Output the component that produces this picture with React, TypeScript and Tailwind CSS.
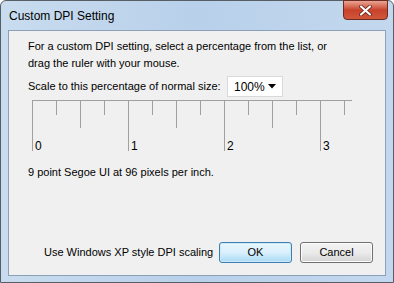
import React from 'react';

const font = "font-['Liberation_Sans',Arial,sans-serif]";

const ticks = Array.from({ length: 14 }, (_, i) => i);

function Ruler() {
  return (
    <div className="relative ml-[4px] h-[52px] w-[320px] border-t border-[#a0a0a0]">
      {ticks.map((i) => {
        const major = i % 4 === 0;
        const half = i % 2 === 0;
        const h = major ? 'h-[50px]' : half ? 'h-[27px]' : 'h-[14px]';
        return (
          <div
            key={i}
            className={`absolute top-0 w-px bg-[#a0a0a0] ${h}`}
            style={{ left: i * 24 }}
          />
        );
      })}
      {[0, 1, 2, 3].map((n) => (
        <span
          key={n}
          className="absolute top-[38px] text-[12px] leading-[14px] text-black"
          style={{ left: n * 96 + 3 }}
        >
          {n}
        </span>
      ))}
    </div>
  );
}

export default function App() {
  return (
    <div className={`${font} relative h-[283px] w-[394px] overflow-hidden bg-white`}>
      <div className="flex h-full flex-col rounded-t-[6px] border border-[#585e66] bg-gradient-to-r from-[#c9dcef] via-[#b8d0ea] to-[#c3d8ee] px-[7px] pb-[6px]">
        <div className="relative flex h-[29px] shrink-0 items-center pl-[1px]">
          <span className="text-[12px] text-black">Custom DPI Setting</span>
          <div className="absolute right-[-2px] top-[-1px] flex h-[20px] w-[45px] items-center justify-center rounded-b-[4px] border border-[#6d2a20] bg-gradient-to-b from-[#e8a493] via-[#c8412a] to-[#d0573c]">
            <svg width="13" height="11" viewBox="0 0 13 11">
              <path d="M2 1.5 L11 9.5 M11 1.5 L2 9.5" stroke="#5a1b10" strokeWidth="3.6" strokeLinecap="round" />
              <path d="M2 1.5 L11 9.5 M11 1.5 L2 9.5" stroke="#ffffff" strokeWidth="2.2" strokeLinecap="round" />
            </svg>
          </div>
        </div>
        <div className="flex flex-1 flex-col border border-[#8ca0b8] bg-[#f0f0f0] pl-[19px] pr-[12px] pt-[7px] text-[11px] text-black">
          <p className="leading-[17px]">
            For a custom DPI setting, select a percentage from the list, or
            <br />
            drag the ruler with your mouse.
          </p>
          <div className="mt-[4px] flex items-center">
            <span className="w-[199px] shrink-0 whitespace-nowrap">Scale to this percentage of normal size:</span>
            <div className="flex h-[21px] w-[56px] items-center justify-between border border-[#d9d9d9] bg-white pl-[6px] pr-[6px] text-[12px]">
              <span>100%</span>
              <svg width="8" height="5" viewBox="0 0 8 5">
                <path d="M0 0 L8 0 L4 4.5 Z" fill="#000" />
              </svg>
            </div>
          </div>
          <div className="mt-[3px]">
            <Ruler />
          </div>
          <p className="mt-[12px]">9 point Segoe UI at 96 pixels per inch.</p>
          <div className="mt-auto mb-[12px] flex items-center">
            <span className="ml-[16px] whitespace-nowrap">Use Windows XP style DPI scaling</span>
            <button className="ml-auto h-[21px] w-[73px] rounded-[3px] border border-[#3c7fb1] bg-gradient-to-b from-[#eaf6fd] via-[#d9f0fc] to-[#a7d9f5] text-[11px] shadow-[inset_0_0_0_1px_#cde9f8]">
              OK
            </button>
            <button className="ml-[8px] h-[21px] w-[73px] rounded-[3px] border border-[#707070] bg-gradient-to-b from-[#f2f2f2] via-[#ebebeb] to-[#d4d4d4] text-[11px] shadow-[inset_0_0_0_1px_#fcfcfc]">
              Cancel
            </button>
          </div>
        </div>
      </div>
    </div>
  );
}
